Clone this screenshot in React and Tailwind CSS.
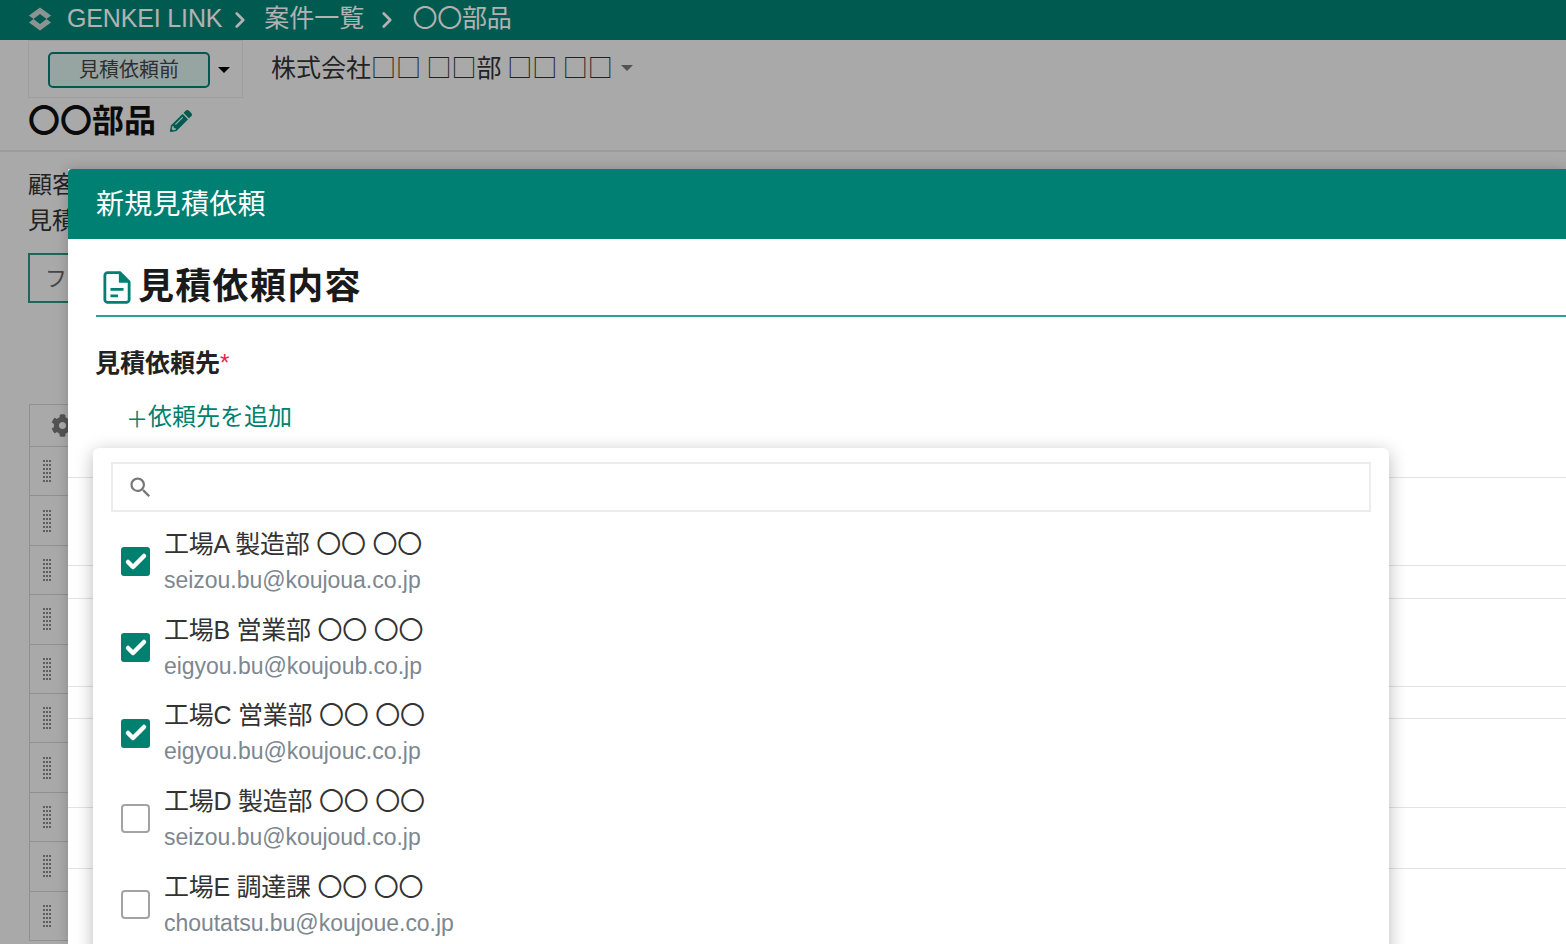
import React from "react";
import { Check, ChevronRight } from "lucide-react";
import { FaCog, FaPencilAlt } from "react-icons/fa";
import { MdSearch } from "react-icons/md";

const people = [
  { name: "工場A 製造部 〇〇 〇〇", mail: "seizou.bu@koujoua.co.jp", on: true },
  { name: "工場B 営業部 〇〇 〇〇", mail: "eigyou.bu@koujoub.co.jp", on: true },
  { name: "工場C 営業部 〇〇 〇〇", mail: "eigyou.bu@koujouc.co.jp", on: true },
  { name: "工場D 製造部 〇〇 〇〇", mail: "seizou.bu@koujoud.co.jp", on: false },
  { name: "工場E 調達課 〇〇 〇〇", mail: "choutatsu.bu@koujoue.co.jp", on: false },
];
const lineGaps = [88, 33, 88, 32, 89, 61, 59];

function Dots() {
  return (
    <div className="grid grid-cols-3 gap-x-px gap-y-[2px]">
      {Array.from({ length: 18 }).map((_, i) => (
        <span key={i} className="w-[2px] h-[2px] bg-[#888]" />
      ))}
    </div>
  );
}

function Logo() {
  return (
    <svg width="24" height="24" viewBox="0 0 24 24" className="text-[#c8d4d2] shrink-0 mb-[2px]">
      <path d="M12 0.5 L23 8.5 L18.5 12 L12 7 L5.5 12 L1 8.5 Z" fill="currentColor" />
      <path d="M12 23.5 L23 15.5 L18.5 12 L12 17 L5.5 12 L1 15.5 Z" fill="currentColor" />
    </svg>
  );
}

function DocIcon() {
  return (
    <svg width="28" height="35" viewBox="0 0 30 36" className="shrink-0 mt-[21px]" fill="none">
      <path
        d="M5 2 H18 L28 12 V31 a3 3 0 0 1 -3 3 H5 a3 3 0 0 1 -3 -3 V5 a3 3 0 0 1 3 -3 Z"
        stroke="#00806f"
        strokeWidth="3"
        strokeLinejoin="round"
      />
      <path d="M18 2 V12 H28 Z" fill="#00806f" stroke="#00806f" strokeWidth="2" strokeLinejoin="round" />
      <path d="M8 20 H22 M8 27 H16" stroke="#00806f" strokeWidth="3" />
    </svg>
  );
}

function Box({ on }) {
  return on ? (
    <div className="w-[29px] h-[29px] rounded-[3px] bg-[#00806f] flex items-center justify-center mb-[6px]">
      <Check size={24} strokeWidth={4.5} className="text-white" />
    </div>
  ) : (
    <div className="w-[29px] h-[29px] rounded-[4px] border-2 border-[#a3a3a3] bg-white mb-[6px]" />
  );
}

export default function App() {
  return (
    <div className="relative w-[1566px] h-[944px] overflow-hidden bg-[#f2f2f2] text-[#222] font-['Liberation_Sans','Noto_Sans_CJK_JP',sans-serif]">
      {/* page behind the dialog */}
      <header className="h-[40px] bg-[#008272] flex items-center pl-[28px] text-white text-[25px] leading-none">
        <Logo />
        <span className="ml-[15px] pb-[3px] tracking-[-0.15px]">GENKEI LINK</span>
        <ChevronRight size={26} strokeWidth={2.5} className="ml-[5px] mb-[1px]" />
        <span className="ml-[11px] pb-[3px]">案件一覧</span>
        <ChevronRight size={26} strokeWidth={2.5} className="ml-[10px] mb-[1px]" />
        <span className="ml-[12px] pb-[3px] tracking-[-0.2px]">〇〇部品</span>
      </header>

      <div className="flex items-start pl-[28px] h-[60px]">
        <div className="w-[215px] h-[58px] border border-[#e2e2e2] flex items-center pl-[19px] pt-[1px]">
          <div className="w-[162px] h-[36px] rounded-[5px] border-2 border-[#00806f] bg-[#d9ece9] flex items-center justify-center text-[20px] text-[#444]">
            見積依頼前
          </div>
          <span className="ml-[8px] w-0 h-0 border-x-[6px] border-x-transparent border-t-[6px] border-t-black" />
        </div>
        <div className="ml-[28px] h-[54px] flex items-center text-[25px] text-[#333] whitespace-nowrap font-['Noto_Sans_CJK_JP',sans-serif]">
          株式会社□□ □□部 □□ □□
          <span className="ml-[8px] mt-[2px] w-0 h-0 border-x-[6px] border-x-transparent border-t-[6px] border-t-[#777]" />
        </div>
      </div>

      <div className="h-[52px] border-b-2 border-[#e0e0e0] pl-[28px] flex items-center pb-[8px]">
        <span className="text-[32px] font-bold leading-none text-[#111]">〇〇部品</span>
        <FaPencilAlt size={22} className="ml-[14px] text-[#008272]" />
      </div>

      <div className="pl-[28px] pt-[15px] text-[24px] leading-[36px] text-[#333]">
        <div>顧客</div>
        <div>見積</div>
      </div>

      <div className="ml-[28px] mt-[14px] w-[120px] h-[50px] border-2 border-[#2a9384] pl-[15px] flex items-center text-[22px] text-[#666]">
        ファイル
      </div>

      <div className="ml-[29px] mt-[101px] w-[80px] border border-[#cfcfcf]">
        <div className="h-[41px] flex items-center pl-[21px]">
          <FaCog size={23} className="text-[#777]" />
        </div>
        {Array.from({ length: 10 }).map((_, i) => (
          <div key={i} className="h-[49.4px] border-t border-[#cfcfcf] flex items-center pl-[13px]">
            <Dots />
          </div>
        ))}
      </div>

      {/* dim layer */}
      <div className="absolute inset-0 bg-black/30" />

      {/* dialog */}
      <section className="absolute left-[68px] top-[169px] right-0 bottom-0 bg-white shadow-[0_0_12px_rgba(0,0,0,0.2)]">
        <div className="h-[70px] bg-[#008072] flex items-center pl-[28px] pt-[1px] text-[28px] tracking-[0.3px] text-white rounded-tl-[4px]">
          新規見積依頼
        </div>

        <div className="ml-[28px] h-[78px] border-b-2 border-[#2fa08f] flex items-center pl-[7px]">
          <DocIcon />
          <h1 className="ml-[7px] mt-[19px] text-[36px] leading-none font-bold text-[#1a1a1a] tracking-[1.3px]">見積依頼内容</h1>
        </div>

        <div className="pl-[27px] mt-[29px] text-[25px] leading-[34px] font-bold text-[#222] whitespace-nowrap">
          見積依頼先<span className="text-[#e0284a] text-[24px] font-normal align-top">*</span>
        </div>

        <div className="pl-[58px] mt-[20px] text-[24px] leading-[34px] text-[#00806f] flex items-center">
          <span className="w-[22px] text-[22px] font-['Noto_Sans_CJK_JP',sans-serif]">＋</span>
          <span>依頼先を追加</span>
        </div>

        {/* rows behind the dropdown */}
        <div className="mt-[42px]">
          <div className="h-px" />
          {lineGaps.map((h, i) => (
            <div key={i} className="border-t border-[#e3e3e3]" style={{ height: h }} />
          ))}
        </div>

        {/* dropdown */}
        <div className="absolute left-[25px] top-[279px] w-[1296px] h-[520px] rounded-[6px] bg-white shadow-[0_4px_18px_rgba(0,0,0,0.28)] px-[18px] pt-[14px]">
          <div className="h-[50px] border-2 border-[#ececec] flex items-center pl-[14px]">
            <MdSearch size={27} className="text-[#777]" />
          </div>
          <ul className="mt-[10px]">
            {people.map((p) => (
              <li key={p.mail} className="h-[85.7px] flex items-center pl-[10px]">
                <Box on={p.on} />
                <div className="ml-[14px] -mt-[6px]">
                  <div className="text-[25px] leading-[36px] text-[#333] whitespace-nowrap tracking-[-0.25px]">{p.name}</div>
                  <div className="text-[23px] leading-[36px] text-[#7d8790] whitespace-nowrap tracking-[-0.03px]">{p.mail}</div>
                </div>
              </li>
            ))}
          </ul>
        </div>
      </section>
    </div>
  );
}
